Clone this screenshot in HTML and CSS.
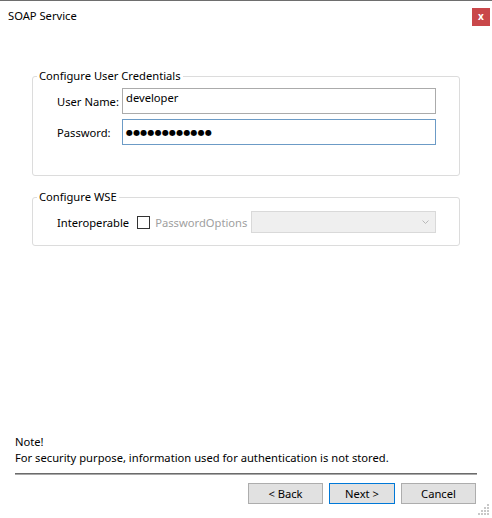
FILE: index.html
```html
<!DOCTYPE html>
<html>
<head>
<meta charset="utf-8">
<link rel="stylesheet" href="styles.css">
</head>
<body>
<div class="window">
  <div class="titlebar">
    <span class="title">SOAP Service</span>
    <span class="close">x</span>
  </div>
  <div class="main">
    <fieldset class="group group-cred">
      <legend>Configure User Credentials</legend>
      <div class="rows">
        <div class="row">
          <span class="label">User Name:</span>
          <div class="textbox">developer</div>
        </div>
        <div class="row">
          <span class="label">Password:</span>
          <div class="textbox focused"><span class="dots">●●●●●●●●●●●●</span></div>
        </div>
      </div>
    </fieldset>
    <fieldset class="group group-wse">
      <legend>Configure WSE</legend>
      <div class="rows">
        <div class="row">
          <span class="interop">Interoperable</span>
          <span class="checkbox"></span>
          <span class="disabled-label">PasswordOptions</span>
          <div class="combo">
            <svg class="chev" width="7" height="5" viewBox="0 0 7 5"><path d="M0.5 0.5 L3.5 3.5 L6.5 0.5" fill="none" stroke="#b8b8b8" stroke-width="1"/></svg>
          </div>
        </div>
      </div>
    </fieldset>
  </div>
  <div class="note">
    <div>Note!</div>
    <div>For security purpose, information used for authentication is not stored.</div>
  </div>
  <div class="separator"></div>
  <div class="buttons">
    <button class="btn btn-back">&lt; Back</button>
    <button class="btn btn-next">Next &gt;</button>
    <button class="btn btn-cancel">Cancel</button>
  </div>
  <svg class="grip" width="12" height="12" viewBox="0 0 12 12">
    <rect x="9" y="0" width="2" height="2" fill="#c8c8c8"/>
    <rect x="6" y="3" width="2" height="2" fill="#c8c8c8"/>
    <rect x="9" y="3" width="2" height="2" fill="#c8c8c8"/>
    <rect x="3" y="6" width="2" height="2" fill="#c8c8c8"/>
    <rect x="6" y="6" width="2" height="2" fill="#c8c8c8"/>
    <rect x="9" y="6" width="2" height="2" fill="#c8c8c8"/>
    <rect x="0" y="9" width="2" height="2" fill="#c8c8c8"/>
    <rect x="3" y="9" width="2" height="2" fill="#c8c8c8"/>
    <rect x="6" y="9" width="2" height="2" fill="#c8c8c8"/>
    <rect x="9" y="9" width="2" height="2" fill="#c8c8c8"/>
  </svg>
</div>
</body>
</html>
```
FILE: styles.css
```css
html, body {
  margin: 0;
  padding: 0;
  background: #ffffff;
}
body {
  font-family: "Noto Sans", "Open Sans", sans-serif;
  font-size: 11.2px;
  color: #000;
}
.window {
  position: relative;
  width: 492px;
  height: 518px;
  box-sizing: border-box;
  border-top: 1px solid #6e6e6e;
  display: flex;
  flex-direction: column;
}
.titlebar {
  height: 31px;
  display: flex;
  align-items: flex-start;
  justify-content: space-between;
}
.title {
  margin-left: 8px;
  margin-top: 7px;
  line-height: 16px;
}
.close {
  width: 18px;
  height: 18px;
  margin-top: 7px;
  margin-right: 2px;
  background: #c9474a;
  color: #fff;
  font-size: 10px;
  font-weight: bold;
  line-height: 17px;
  text-align: center;
}
.main {
  padding: 36px 32px 0 32px;
  display: flex;
  flex-direction: column;
}
.group {
  margin: 0;
  border: 1px solid #dcdcdc;
  border-radius: 3px;
  padding: 4px 0 30px 4px;
  min-width: 0;
}
.group legend {
  padding: 0 2px;
  line-height: 16px;
}
.group-wse {
  margin-top: 13px;
  padding-top: 6px;
  padding-bottom: 12px;
}
.rows {
  display: flex;
  flex-direction: column;
  gap: 5px;
  padding: 0 23px 0 20px;
}
.row {
  display: flex;
  align-items: center;
  white-space: nowrap;
}
.label {
  width: 65px;
  flex: none;
}
.textbox {
  flex: 1;
  height: 26px;
  box-sizing: border-box;
  border: 1px solid #ababab;
  padding: 1px 3px;
  line-height: 16px;
}
.textbox.focused {
  border-color: #6c9bc6;
  padding-top: 0;
  line-height: 22px;
}
.dots {
  font-family: "DejaVu Sans", sans-serif;
  font-size: 8px;
  letter-spacing: 0.2px;
}
.interop {
  flex: none;
}
.checkbox {
  width: 13px;
  height: 13px;
  box-sizing: border-box;
  border: 1px solid #333;
  margin-left: 8px;
  flex: none;
}
.disabled-label {
  margin-left: 5px;
  color: #a0a0a0;
  flex: none;
}
.combo {
  margin-left: auto;
  width: 185px;
  height: 22px;
  box-sizing: border-box;
  border: 1px solid #d9d9d9;
  background: #efefef;
  display: flex;
  align-items: center;
  justify-content: flex-end;
  padding-right: 6px;
  flex: none;
}
.note {
  margin-top: auto;
  padding-left: 15px;
  line-height: 16px;
}
.separator {
  margin: 7px 15px 0 15px;
  border-top: 1px solid #6b6b6b;
  border-bottom: 1px solid #a8a8a8;
}
.buttons {
  display: flex;
  justify-content: flex-end;
  gap: 6px;
  padding: 8px 16px 0 0;
  height: 43px;
  box-sizing: border-box;
  flex: none;
}
.btn {
  font-family: "Noto Sans", "Open Sans", sans-serif;
  font-size: 11.2px;
  height: 21px;
  margin: 0;
  padding: 0;
  background: #e1e1e1;
  border: 1px solid #adadad;
  color: #000;
  line-height: 18px;
}
.btn-back, .btn-cancel {
  width: 75px;
}
.btn-next {
  width: 66px;
  border-color: #0078d7;
}
.grip {
  position: absolute;
  right: 2px;
  bottom: 2px;
}
```
